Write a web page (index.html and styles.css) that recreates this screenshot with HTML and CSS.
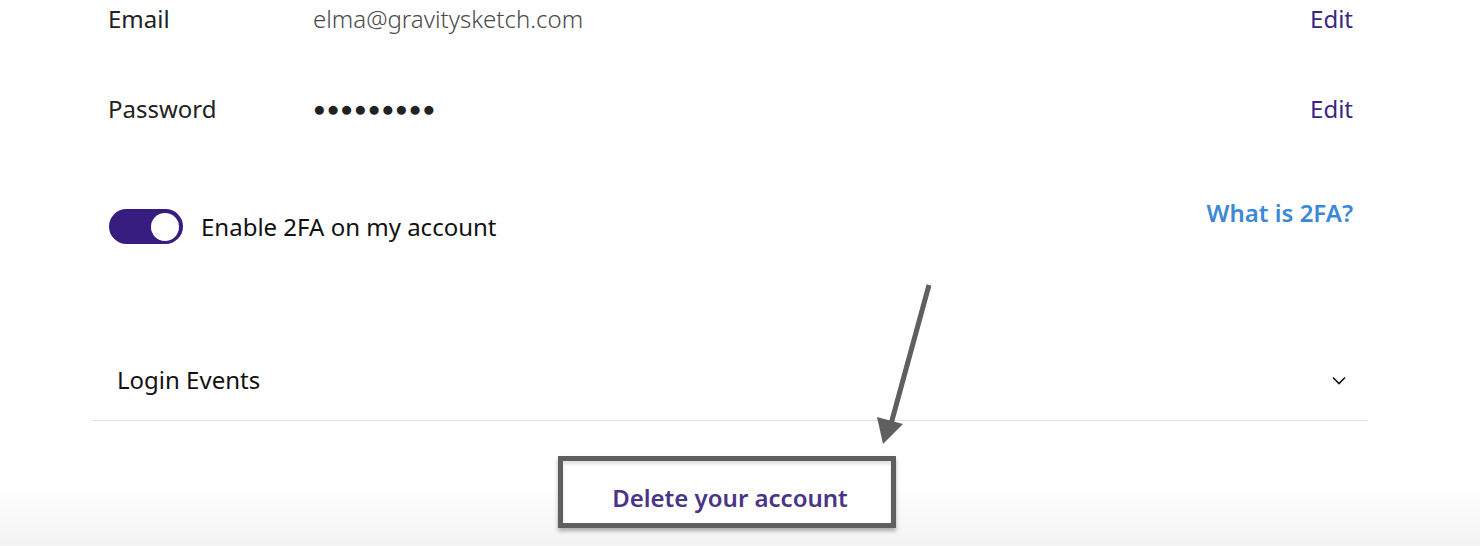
FILE: index.html
```html
<!DOCTYPE html>
<html lang="en">
<head>
<meta charset="utf-8">
<title>Account</title>
<link rel="stylesheet" href="styles.css">
</head>
<body>
<main class="page">
  <section class="details">
    <div class="row">
      <span class="label">Email</span>
      <span class="value">elma@gravitysketch.com</span>
      <a class="edit" href="#">Edit</a>
    </div>
    <div class="row">
      <span class="label">Password</span>
      <span class="value dots">●●●●●●●●●</span>
      <a class="edit" href="#">Edit</a>
    </div>
    <div class="row twofa">
      <label class="toggle-wrap">
        <span class="toggle"><span class="knob"></span></span>
        <span class="toggle-text">Enable 2FA on my account</span>
      </label>
      <a class="help" href="#">What is 2FA?</a>
    </div>
  </section>
  <section class="login-events">
    <span class="le-title">Login Events</span>
    <svg class="chev" width="14" height="9" viewBox="0 0 14 9"><path d="M1 1.5 L7 7.5 L13 1.5" fill="none" stroke="#111" stroke-width="1.6"/></svg>
  </section>
  <div class="delete-wrap">
    <button class="delete">Delete your account</button>
  </div>
  <svg class="arrow" width="1480" height="546" viewBox="0 0 1480 546">
    <line x1="929" y1="285" x2="891" y2="424" stroke="#5f5f5f" stroke-width="5"/>
    <polygon points="877,417 903,424 883,444" fill="#5f5f5f"/>
  </svg>
</main>
</body>
</html>
```
FILE: styles.css
```css
html, body {
  margin: 0;
  padding: 0;
}
body {
  width: 1480px;
  height: 546px;
  overflow: hidden;
  font-family: "Noto Sans", "Open Sans", sans-serif;
  font-size: 24px;
  line-height: 33px;
  color: #1a1a1a;
  background: linear-gradient(to bottom, #ffffff 0, #ffffff 485px, #f3f3f3 546px);
}
.page {
  position: relative;
  height: 546px;
}
.details {
  padding: 2px 127px 0 108px;
}
.row {
  display: flex;
  align-items: flex-start;
  height: 90px;
}
.label {
  width: 205px;
  color: #222;
}
.value {
  flex: 1;
  color: #4a4a4a;
  font-weight: 300;
}
.dots {
  font-size: 21px;
  letter-spacing: 1px;
  color: #222;
}
.edit {
  color: #3a2584;
  text-decoration: none;
}
.twofa {
  margin-top: 14px;
  height: auto;
  justify-content: space-between;
}
.toggle-wrap {
  display: flex;
  align-items: center;
  gap: 18px;
  margin-top: 13px;
  margin-left: 1px;
}
.toggle {
  display: flex;
  align-items: center;
  justify-content: flex-end;
  width: 74px;
  height: 35px;
  border-radius: 18px;
  background: #361d7f;
  padding: 0 4px;
  box-sizing: border-box;
}
.knob {
  width: 28px;
  height: 28px;
  border-radius: 50%;
  background: #fff;
}
.toggle-text {
  color: #111;
}
.help {
  color: #3b88d6;
  font-weight: 600;
  text-decoration: none;
}
.login-events {
  margin: 119px 112px 0 92px;
  padding: 0 22px 24px 25px;
  display: flex;
  justify-content: space-between;
  align-items: center;
  border-bottom: 1px solid #dde0e6;
}
.le-title {
  color: #111;
}
.chev {
  margin-top: 2px;
}
.delete-wrap {
  display: flex;
  justify-content: center;
  padding-left: 86px;
  padding-right: 112px;
  margin-top: 35px;
}
.delete {
  font-family: inherit;
  font-size: 24px;
  line-height: 33px;
  font-weight: 600;
  color: #4a3485;
  background: #fff;
  border: 5px solid #5f5f5f;
  padding: 20px 43px 9px 49px;
  box-shadow: 0 3px 4px rgba(0, 0, 0, 0.3), inset 0 3px 3px rgba(0, 0, 0, 0.12);
  cursor: pointer;
}
.arrow {
  position: absolute;
  left: 0;
  top: 0;
  pointer-events: none;
}
```
